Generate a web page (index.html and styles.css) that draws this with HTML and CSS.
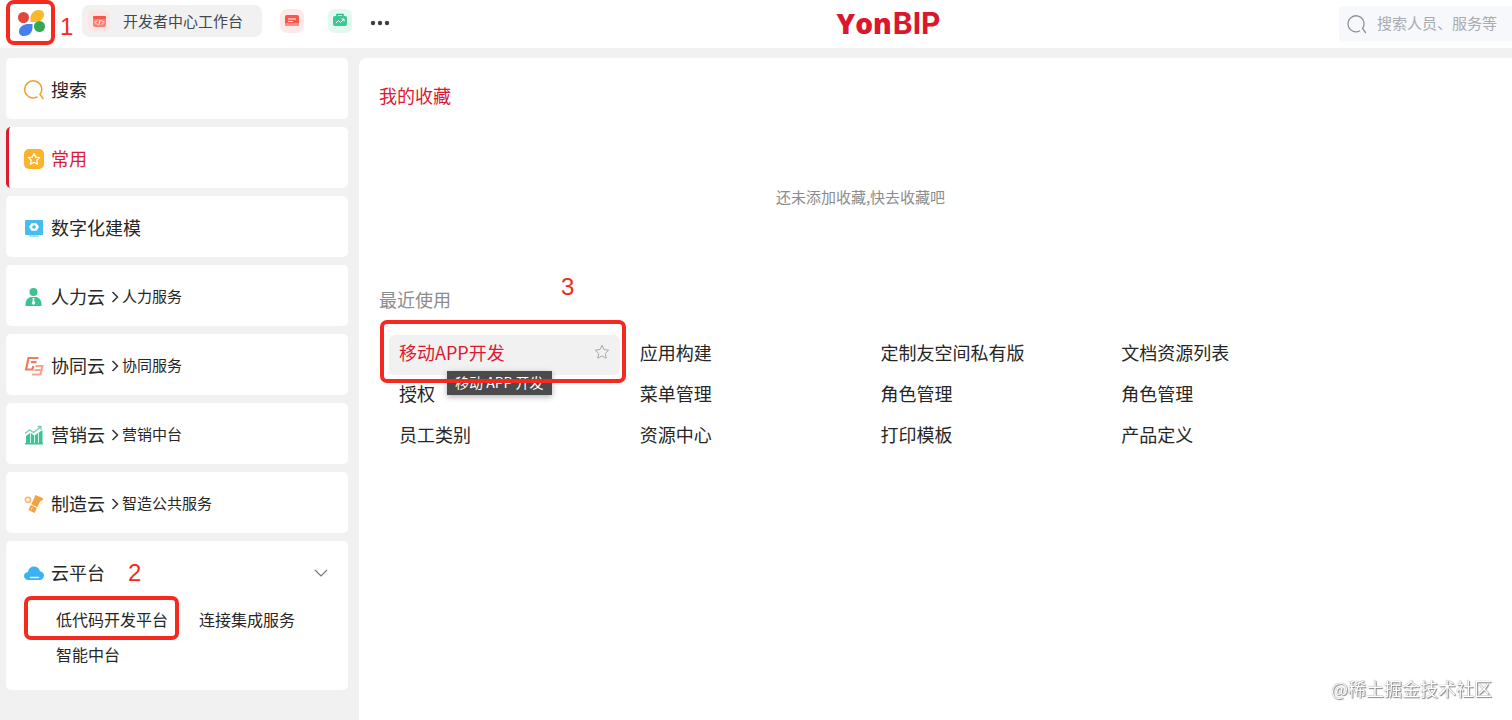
FILE: index.html
```html
<!DOCTYPE html>
<html lang="zh-CN">
<head>
  <meta charset="UTF-8">
  <meta name="viewport" content="width=device-width, initial-scale=1.0">
  <title>YonBIP</title>
  <link rel="stylesheet" href="styles.css">
</head>
<body>

<header class="header">
  <nav class="tabs">
    <button type="button" class="app-btn" aria-label="应用">
      <svg width="28" height="28" viewBox="0 0 28 28">
        <circle cx="6.500" cy="8.500" r="5.500" fill="#e5453a"/>
        <path d="M13.500 13V9.500C13.500 4 17.500 1 22 1c3 0 5 2 5 4.500C27 10.500 22 13 17.500 13z" fill="#fbb829"/>
        <path d="M15.500 15v3.500c0 5-4 8.500-8.500 8.500-3.500 0-5-2-5-4.500C2 17.500 7 15 11.500 15z" fill="#4680f0"/>
        <circle cx="22.500" cy="17.500" r="5.500" fill="#35a853"/>
      </svg>
      <span class="num num-1">1</span>
    </button>
    <a href="#" class="tab">
      <svg width="22" height="22" viewBox="0 0 22 22">
        <rect width="22" height="22" rx="6" fill="#fae6e5"/>
        <rect x="5" y="6" width="13" height="11" rx="2" fill="#fb8177"/>
        <rect x="5" y="6" width="13" height="3" rx="1" fill="#f4554c"/>
        <path d="M9 10.500l-2 2 2 2M14 10.500l2 2-2 2M12.200 10l-1.400 5" fill="none" stroke="#fff"/>
      </svg>
      <span>开发者中心工作台</span>
    </a>
    <a href="#" class="tab-icon" aria-label="消息">
      <svg width="24" height="24" viewBox="0 0 24 24">
        <rect width="24" height="24" rx="7" fill="#fdeae8"/>
        <rect x="5" y="6" width="14" height="11" rx="2" fill="#f5574c"/>
        <rect x="5" y="14" width="14" height="3" rx="1" fill="#fb8d83"/>
        <path d="M8 10h8M8 12.500h5" stroke="#fff"/>
      </svg>
    </a>
    <a href="#" class="tab-icon" aria-label="报表">
      <svg width="24" height="24" viewBox="0 0 24 24">
        <rect width="24" height="24" rx="7" fill="#e3f8ef"/>
        <path d="M9 7V5.500h6V7" fill="none" stroke="#2eb98a" stroke-width="1.500"/>
        <rect x="5" y="7" width="14" height="10" rx="2" fill="#3cc796"/>
        <path d="M8 14l2.500-2.500 2 2L16 10M13.500 10H16v2.500" fill="none" stroke="#fff"/>
      </svg>
    </a>
    <button type="button" class="more" aria-label="更多">
      <svg width="20" height="6" viewBox="0 0 20 6" fill="#3c3f46">
        <circle cx="3" cy="3" r="2.200"/><circle cx="10" cy="3" r="2.200"/><circle cx="17" cy="3" r="2.200"/>
      </svg>
    </button>
  </nav>
  <div class="logo"><span class="logo-yon">Yon</span>BIP</div>
  <label class="search">
    <svg width="20" height="20" viewBox="0 0 20 20" fill="none" stroke="#8f9196" stroke-width="1.300" stroke-linecap="round">
      <path d="M12.500 17A8 8 0 1 1 15.500 14.500L18.500 18.500"/>
    </svg>
    <input type="text" placeholder="搜索人员、服务等" aria-label="搜索人员、服务等">
  </label>
</header>

<div class="page">
  <aside class="sidebar">
    <a href="#" class="card">
      <svg width="20" height="20" viewBox="0 0 20 20" fill="none" stroke="#f0a030" stroke-width="1.500" stroke-linecap="round">
        <path d="M13 17A8.500 8.500 0 1 1 16 14.500L19 18.500"/>
      </svg>
      <span>搜索</span>
    </a>
    <a href="#" class="card active">
      <svg width="20" height="20" viewBox="0 0 20 20">
        <rect width="20" height="20" rx="5" fill="#fbb32c"/>
        <path d="M10 4.500l1.700 3.600 3.900.5-2.800 2.700.7 3.900-3.500-1.900-3.500 1.900.7-3.900-2.800-2.700 3.900-.5z" fill="none" stroke="#fff" stroke-width="1.300" stroke-linejoin="round"/>
      </svg>
      <span>常用</span>
    </a>
    <a href="#" class="card">
      <svg width="20" height="20" viewBox="0 0 20 20">
        <rect x="1" y="2" width="18" height="15" rx="1" fill="#45bdf0"/>
        <rect x="5" y="17" width="10" height="2" rx="1" fill="#a3e3fb"/>
        <path d="M7.500 5.200h5L15 9l-2.500 3.800h-5L5 9z" fill="#fff"/>
        <circle cx="10" cy="9" r="1.800" fill="#45bdf0"/>
      </svg>
      <span>数字化建模</span>
    </a>
    <a href="#" class="card">
      <svg width="20" height="20" viewBox="0 0 20 20">
        <circle cx="9.500" cy="5" r="4" fill="#3cc391"/>
        <path d="M1.500 19v-2C1.500 13 4 10.500 7 10h5c3 .5 5.500 3 5.500 7v2z" fill="#3cc391"/>
        <path d="M8.300 11h2.400l-.6 1.500 1 4-1.600 1.500-1.600-1.500 1-4z" fill="#fff"/>
      </svg>
      <span>人力云</span>
      <svg class="arrow" width="8" height="12" viewBox="0 0 8 12"><path d="M1.500 1l5 5-5 5"/></svg>
      <small>人力服务</small>
    </a>
    <a href="#" class="card">
      <svg width="20" height="20" viewBox="0 0 20 20" fill="none" stroke-width="2.200">
        <path d="M14.500 2H4.500L2 13.500h6.500l.8-3.500M7 6.200h5.500" stroke="#f4795f"/>
        <path d="M11.500 10h7l-2 8.500H8M17.500 14H10.500" stroke="#f9a48e"/>
      </svg>
      <span>协同云</span>
      <svg class="arrow" width="8" height="12" viewBox="0 0 8 12"><path d="M1.500 1l5 5-5 5"/></svg>
      <small>协同服务</small>
    </a>
    <a href="#" class="card">
      <svg width="20" height="20" viewBox="0 0 20 20" fill="#3cc391">
        <path d="M2 11l4-3v10H2zM6.800 8L10 10.500V18H6.800zM10.800 10.500L14 8v10h-3.200zM14.800 7.500L18.500 5v13h-3.700z"/>
        <path d="M1 18h18v1.500H1z"/>
        <path d="M1 8.500L5.500 5 9.500 7.500 16.500 2M13.500 1.500H17V5" fill="none" stroke="#6fd3ae" stroke-width="1.300"/>
      </svg>
      <span>营销云</span>
      <svg class="arrow" width="8" height="12" viewBox="0 0 8 12"><path d="M1.500 1l5 5-5 5"/></svg>
      <small>营销中台</small>
    </a>
    <a href="#" class="card">
      <svg width="20" height="20" viewBox="0 0 20 20">
        <circle cx="4" cy="5.800" r="2.500" fill="none" stroke="#f8b972" stroke-width="1.800"/>
        <path d="M11.500 1l7.500 3.200-.6 2.300-2 .5L10.500 19l-6-3L10 4.500z" fill="#f2a23f"/>
        <path d="M7 10.500l6 3" stroke="#fff"/>
        <path d="M7 16l1.500-3" stroke="#fbd9a8"/>
      </svg>
      <span>制造云</span>
      <svg class="arrow" width="8" height="12" viewBox="0 0 8 12"><path d="M1.500 1l5 5-5 5"/></svg>
      <small>智造公共服务</small>
    </a>
    <section class="card-open">
      <button type="button" class="card">
        <svg width="20" height="20" viewBox="0 0 20 20">
          <path d="M4.500 17C1.800 17 0 15.300 0 13s1.700-3.800 3.800-4C4.500 5.500 7 3.500 10 3.500s5.300 1.800 6 4.700c2.400.3 4 2 4 4.300 0 2.600-2 4.500-4.500 4.500z" fill="#3db2f2"/>
          <path d="M6.500 14.500h8" stroke="#d5f2ff" stroke-width="1.500" stroke-linecap="round"/>
        </svg>
        <span>云平台</span>
        <svg class="down" width="14" height="8" viewBox="0 0 14 8"><path d="M1 1l6 6 6-6"/></svg>
      </button>
      <ul class="sub-list">
        <li class="marked-sub"><a href="#">低代码开发平台</a><span class="num num-2">2</span></li>
        <li><a href="#">连接集成服务</a></li>
        <li><a href="#">智能中台</a></li>
      </ul>
    </section>
  </aside>

  <main class="main">
    <h2 class="title title-red">我的收藏</h2>
    <p class="empty">还未添加收藏,快去收藏吧</p>
    <h2 class="title title-gray">最近使用</h2>
    <ul class="recent">
      <li class="current">
        <a href="#">移动APP开发</a>
        <button type="button" class="star" aria-label="收藏">
          <svg width="16" height="16" viewBox="0 0 16 16"><path d="M8 1.300l2 4.300 4.700.6-3.400 3.300.9 4.700L8 11.900l-4.200 2.300.9-4.700L1.300 6.200 6 5.600z" fill="none" stroke="#a9a9a9" stroke-linejoin="round"/></svg>
        </button>
        <span class="tooltip">移动 APP 开发</span>
        <span class="num num-3">3</span>
      </li>
      <li><a href="#">应用构建</a></li>
      <li><a href="#">定制友空间私有版</a></li>
      <li><a href="#">文档资源列表</a></li>
      <li><a href="#">授权</a></li>
      <li><a href="#">菜单管理</a></li>
      <li><a href="#">角色管理</a></li>
      <li><a href="#">角色管理</a></li>
      <li><a href="#">员工类别</a></li>
      <li><a href="#">资源中心</a></li>
      <li><a href="#">打印模板</a></li>
      <li><a href="#">产品定义</a></li>
    </ul>
  </main>
</div>

<div class="watermark">@稀土掘金技术社区</div>

</body>
</html>
```
FILE: styles.css
```css
* {
  box-sizing: border-box;
}
body {
  margin: 0;
  min-height: 100vh;
  display: flex;
  flex-direction: column;
  background: #f1f1f1;
  color: #262626;
  font-family: "Noto Sans CJK SC", sans-serif;
  font-size: 18px;
  line-height: 26px;
}
a {
  color: inherit;
  text-decoration: none;
}
button {
  padding: 0;
  border: none;
  background: none;
  color: inherit;
  font: inherit;
  cursor: pointer;
}
ul {
  list-style: none;
  margin: 0;
  padding: 0;
}
svg {
  display: block;
  flex: none;
}

/* header */
.header {
  display: grid;
  grid-template-columns: 55% 1fr auto;
  height: 48px;
  background: #fff;
}
.tabs {
  display: flex;
  align-items: flex-start;
  padding-left: 6px;
}
.app-btn {
  position: relative;
  display: flex;
  align-items: center;
  justify-content: center;
  width: 49px;
  height: 45px;
  margin-right: 27px;
  border: 4px solid #f5291d;
  border-radius: 8px;
}
.tab {
  display: flex;
  align-items: center;
  gap: 13px;
  height: 32px;
  margin-top: 5px;
  padding: 0 19px 0 6px;
  border-radius: 8px;
  background: #f1f1f1;
  color: #44474f;
  font-size: 15px;
}
.tab-icon {
  margin: 9px 0 0 18px;
}
.tab-icon + .tab-icon {
  margin-left: 24px;
}
.more {
  margin: 20px 0 0 18px;
}
.logo {
  padding-left: 5px;
  color: #db1730;
  font-family: Inter, sans-serif;
  font-size: 30px;
  font-weight: 700;
  line-height: 46px;
}
.logo-yon {
  margin-right: 1px;
  font-family: "Open Sans", sans-serif;
  font-size: 28px;
  font-weight: 800;
}
.search {
  display: flex;
  align-items: center;
  gap: 10px;
  width: 173px;
  height: 35px;
  margin-top: 6px;
  padding-left: 8px;
  border-radius: 4px 0 0 4px;
  background: #f7f8fc;
}
.search input {
  flex: 1;
  min-width: 0;
  padding: 0 0 2px;
  border: none;
  outline: none;
  background: none;
  font: inherit;
  font-size: 15px;
}
.search input::placeholder {
  color: #a9abb0;
}

/* layout */
.page {
  flex: 1;
  display: flex;
  gap: 11px;
  padding: 10px 0 0 6px;
}
.sidebar {
  display: flex;
  flex-direction: column;
  gap: 8px;
  width: 342px;
}
.main {
  flex: 1;
  padding: 24px 20px;
  border-radius: 8px 0 0 0;
  background: #fff;
}

/* sidebar */
.card {
  display: flex;
  align-items: center;
  width: 100%;
  height: 61px;
  padding: 2px 20px 0 18px;
  border-radius: 5px;
  background: #fff;
}
.card span,
.card small {
  padding-bottom: 2px;
}
.card span {
  margin-left: 7px;
}
.card small {
  font-size: 15px;
}
.active {
  padding-left: 15px;
  border-left: 3px solid #dd1a32;
  color: #dd1a32;
}
.arrow,
.down {
  fill: none;
  stroke: #333;
  stroke-width: 1.5;
}
.arrow {
  margin: 0 3px 0 6px;
}
.down {
  margin-left: auto;
  stroke: #777;
  stroke-width: 1.2;
}
.card-open {
  padding-bottom: 18px;
  border-radius: 5px;
  background: #fff;
}
.sub-list {
  display: grid;
  grid-template-columns: 143px 1fr;
  padding-left: 50px;
  font-size: 16px;
  line-height: 35px;
}
.marked-sub {
  position: relative;
}

/* main */
.title {
  margin: 0;
  font-size: 18px;
  font-weight: 400;
}
.title-red {
  color: #dd1a32;
}
.title-gray {
  margin-bottom: 23px;
  color: #8c8c8c;
}
.empty {
  margin: 76px 0;
  padding-right: 150px;
  color: #8c8c8c;
  font-size: 15px;
  text-align: center;
}
.recent {
  display: grid;
  grid-template-columns: repeat(4, 1fr);
  gap: 1px 10px;
  padding: 0 150px 0 10px;
}
.recent li {
  display: flex;
  align-items: center;
  justify-content: space-between;
  height: 40px;
  padding: 0 10px 6px;
}
.recent .current {
  position: relative;
  border-radius: 6px;
  background: #f1f1f1;
  color: #dd1a32;
}
.tooltip {
  position: absolute;
  top: 36px;
  left: 58px;
  padding: 0 8px 2px;
  background: #4b4b4b;
  box-shadow: 0 2px 6px rgba(0, 0, 0, 0.3);
  color: #fff;
  font-size: 14px;
  line-height: 22px;
  white-space: nowrap;
}

/* numbered steps */
.marked-sub::after,
.current::after {
  content: "";
  position: absolute;
  border: 4px solid #f5291d;
  border-radius: 7px;
  pointer-events: none;
}
.marked-sub::after {
  inset: -6px 20px -3px -32px;
}
.current::after {
  inset: -15px -6px -8px -9px;
}
.num {
  position: absolute;
  color: #f5291d;
  font-family: "Liberation Sans", sans-serif;
  font-size: 24px;
  line-height: 24px;
}
.num-1 {
  top: 11px;
  left: 50px;
}
.num-2 {
  top: -41px;
  left: 72px;
}
.num-3 {
  top: -60px;
  left: 172px;
}

.watermark {
  position: fixed;
  right: 20px;
  bottom: 19px;
  color: #fff;
  text-shadow: 0 0 1px #666, 1px 1px 1px #888;
}
```
